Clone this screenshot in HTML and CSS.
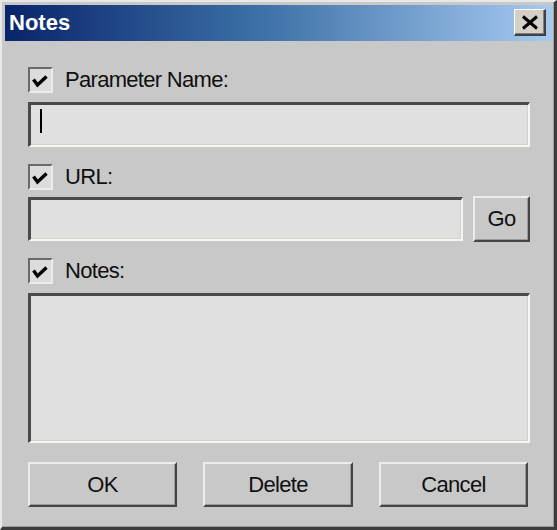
FILE: index.html
```html
<!DOCTYPE html>
<html>
<head>
<meta charset="utf-8">
<link rel="stylesheet" href="styles.css">
</head>
<body>
<div class="window">
  <div class="inner">
    <div class="titlebar">
      <span class="title">Notes</span>
      <span class="close">
        <svg width="18" height="15" viewBox="0 0 18 15"><path d="M2 1.5 L16 13.5 M16 1.5 L2 13.5" stroke="#000" stroke-width="3" fill="none"/></svg>
      </span>
    </div>
    <div class="content">
      <div class="check-row first">
        <span class="checkbox"><svg width="21" height="22" viewBox="0 0 21 22"><path d="M3.5 10.5 L7.5 16 L16.5 7.5" stroke="#000" stroke-width="3.4" fill="none"/></svg></span>
        <span class="label">Parameter Name:</span>
      </div>
      <div class="field single"><span class="caret"></span></div>

      <div class="check-row url">
        <span class="checkbox"><svg width="21" height="22" viewBox="0 0 21 22"><path d="M3.5 10.5 L7.5 16 L16.5 7.5" stroke="#000" stroke-width="3.4" fill="none"/></svg></span>
        <span class="label">URL:</span>
      </div>
      <div class="url-line">
        <div class="field url-field"></div>
        <div class="btn go">Go</div>
      </div>

      <div class="check-row notes">
        <span class="checkbox"><svg width="21" height="22" viewBox="0 0 21 22"><path d="M3.5 10.5 L7.5 16 L16.5 7.5" stroke="#000" stroke-width="3.4" fill="none"/></svg></span>
        <span class="label">Notes:</span>
      </div>
      <div class="field area"></div>

      <div class="buttons">
        <div class="btn b1">OK</div>
        <div class="btn b2">Delete</div>
        <div class="btn b3">Cancel</div>
      </div>
    </div>
  </div>
</div>
</body>
</html>
```
FILE: styles.css
```css
html, body {
  margin: 0;
  padding: 0;
  background: #c8c8c8;
}
.window {
  width: 557px;
  height: 530px;
  box-sizing: border-box;
  border-top: 2px solid #e8e8e8;
  border-left: 2px solid #e8e8e8;
  border-right: 3px solid #3c3c3c;
  border-bottom: 3px solid #3c3c3c;
  background: #c8c8c8;
  font-family: "Liberation Sans", Arial, sans-serif;
}
.inner {
  height: 100%;
  box-sizing: border-box;
  border-right: 1px solid #9c9c9c;
  border-bottom: 1px solid #9c9c9c;
  padding: 3px 1px 0 3px;
}
.titlebar {
  height: 36px;
  background: linear-gradient(to right, #0a246a 0%, #3a6ea5 45%, #a6caf0 100%);
  display: flex;
  justify-content: space-between;
  align-items: flex-start;
}
.title {
  color: #fff;
  font-weight: bold;
  font-size: 22px;
  line-height: 36px;
  padding-left: 4px;
}
.close {
  margin-top: 4px;
  margin-right: 6px;
  width: 32px;
  height: 27px;
  box-sizing: border-box;
  background: #d4d0c8;
  border-top: 1px solid #ffffff;
  border-left: 1px solid #ffffff;
  border-right: 2px solid #404040;
  border-bottom: 2px solid #404040;
  box-shadow: inset -1px -1px 0 #808080;
  display: flex;
  align-items: center;
  justify-content: center;
}
.content {
  padding: 0 22px 0 23px;
  display: flex;
  flex-direction: column;
}
.check-row {
  display: flex;
  align-items: center;
  height: 26px;
  gap: 12px;
}
.check-row.first { margin-top: 26px; }
.check-row.url { margin-top: 17px; }
.check-row.notes { margin-top: 16px; }
.checkbox {
  width: 25px;
  height: 26px;
  box-sizing: border-box;
  background: #dcdcdc;
  border-top: 2px solid #6a6a6a;
  border-left: 2px solid #6a6a6a;
  border-right: 2px solid #ececec;
  border-bottom: 2px solid #ececec;
  display: flex;
}
.label {
  font-size: 22px;
  letter-spacing: -0.7px;
  color: #101010;
}
.field {
  box-sizing: border-box;
  background: #e0e0e0;
  border-top: 3px solid #4a4a4a;
  border-left: 3px solid #4a4a4a;
  border-right: 2px solid #f6f6f6;
  border-bottom: 2px solid #f6f6f6;
  box-shadow: inset -1px -1px 0 #d6d2c6;
}
.field.single {
  margin-top: 9px;
  height: 45px;
  padding: 4px 0 0 9px;
}
.caret {
  display: block;
  width: 2px;
  height: 24px;
  background: #000;
}
.url-line {
  margin-top: 6px;
  display: flex;
  align-items: center;
  gap: 10px;
  height: 46px;
}
.url-field {
  width: 435px;
  height: 44px;
}
.area {
  margin-top: 9px;
  height: 150px;
}
.btn {
  box-sizing: border-box;
  background: #c8c8c8;
  border-top: 2px solid #ececec;
  border-left: 2px solid #ececec;
  border-right: 2px solid #454545;
  border-bottom: 2px solid #454545;
  box-shadow: inset -1px -1px 0 #9a9a9a;
  display: flex;
  align-items: center;
  justify-content: center;
  font-size: 22px;
  letter-spacing: -0.7px;
  color: #101010;
}
.go {
  width: 57px;
  height: 46px;
}
.buttons {
  margin-top: 19px;
  display: flex;
  gap: 26px;
}
.buttons .btn {
  height: 45px;
  width: 149px;
}
.buttons .b2 { width: 150px; }
```
